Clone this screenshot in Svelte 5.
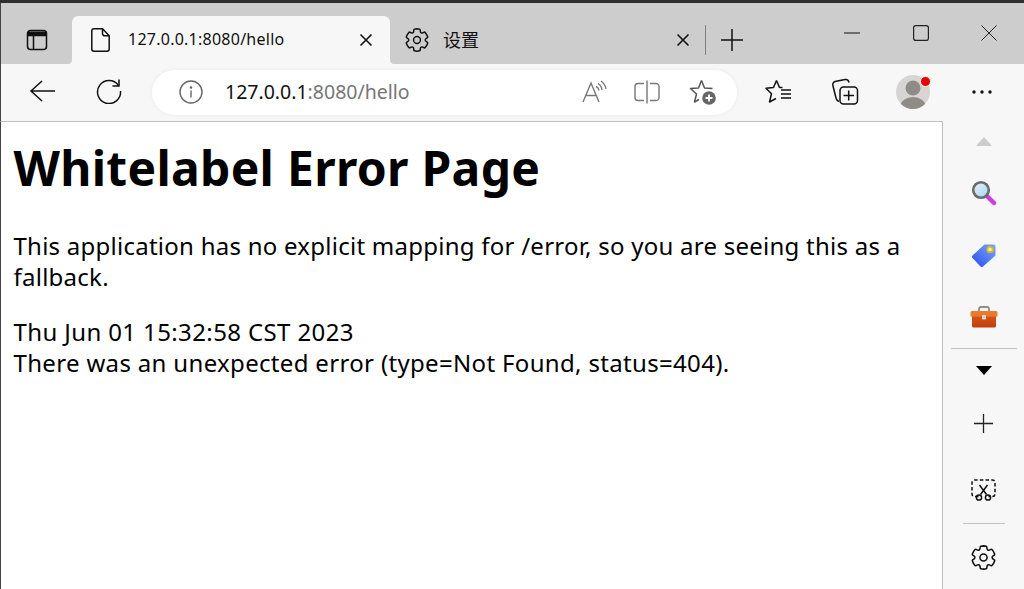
<script>
  const gearOuter = "M12.012 2.25c.734.008 1.465.093 2.182.253a.75.75 0 0 1 .582.649l.17 1.527a1.384 1.384 0 0 0 1.927 1.116l1.401-.615a.75.75 0 0 1 .85.174 9.792 9.792 0 0 1 2.204 3.792.75.75 0 0 1-.271.825l-1.242.916a1.381 1.381 0 0 0 0 2.226l1.243.915a.75.75 0 0 1 .272.826 9.797 9.797 0 0 1-2.204 3.792.75.75 0 0 1-.848.175l-1.407-.617a1.38 1.38 0 0 0-1.926 1.114l-.169 1.526a.75.75 0 0 1-.572.647 9.518 9.518 0 0 1-4.406 0 .75.75 0 0 1-.572-.647l-.168-1.524a1.382 1.382 0 0 0-1.926-1.11l-1.406.616a.75.75 0 0 1-.849-.175 9.798 9.798 0 0 1-2.204-3.796.75.75 0 0 1 .272-.826l1.243-.916a1.38 1.38 0 0 0 0-2.226l-1.243-.914a.75.75 0 0 1-.271-.826 9.79 9.79 0 0 1 2.204-3.792.75.75 0 0 1 .85-.174l1.4.615a1.387 1.387 0 0 0 1.93-1.118l.17-1.526a.75.75 0 0 1 .583-.65c.717-.159 1.45-.243 2.201-.252z";
</script>

<div class="win">
  <div class="strip">
    <div class="slot tabs-btn">
      <svg width="24" height="24" viewBox="0 0 24 24" fill="none" stroke="#111" stroke-width="1.5"><path d="M5.5 2.5h13a3 3 0 0 1 3 3v13a3 3 0 0 1-3 3h-13a3 3 0 0 1-3-3v-13a3 3 0 0 1 3-3z"/><path d="M3 3.5h18v4H3z" fill="#111" stroke="none"/><path d="M3 7.5h18M8.5 7.5v14"/></svg>
    </div>
    <div class="tab active">
      <svg width="19" height="24" viewBox="0 0 19 24" fill="none" stroke="#111" stroke-width="1.5" stroke-linejoin="round"><path d="M3 .8h8.500l6.700 7v13.200a2.200 2.200 0 0 1-2.200 2.200H3A2.200 2.200 0 0 1 .8 21V3A2.200 2.200 0 0 1 3 .8z"/><path d="M11.500.8v4.700a2.300 2.300 0 0 0 2.300 2.300h4.400"/></svg>
      <span class="tab-title">127.0.0.1:8080/hello</span>
      <svg class="tab-x" width="14" height="14" viewBox="0 0 14 14" stroke="#111" stroke-width="1.6"><path d="M1.500 1.500l11 11M12.500 1.500l-11 11"/></svg>
    </div>
    <div class="tab second">
      <svg width="24" height="24" viewBox="1.5 1.5 21 21" fill="none" stroke="#111" stroke-width="1.300" stroke-linejoin="round"><path d={gearOuter}/><circle cx="12" cy="12" r="3"/></svg>
      <span class="tab-title cjk">设置</span>
      <svg class="tab-x" width="14" height="14" viewBox="0 0 14 14" stroke="#111" stroke-width="1.600"><path d="M1.500 1.500l11 11M12.500 1.500l-11 11"/></svg>
    </div>
    <div class="tab-sep"></div>
    <div class="new-tab">
      <svg width="22" height="22" viewBox="0 0 22 22" stroke="#111" stroke-width="1.500"><path d="M11 0v22M0 11h22"/></svg>
    </div>
    <div class="win-controls">
      <div class="wc"><svg width="16" height="16" viewBox="0 0 16 16" stroke="#222" stroke-width="1.100"><path d="M0 8h16"/></svg></div>
      <div class="wc"><svg width="16" height="16" viewBox="0 0 16 16" fill="none" stroke="#222" stroke-width="1.200"><rect x=".6" y=".6" width="14.800" height="14.800" rx="2.200"/></svg></div>
      <div class="wc"><svg width="16" height="16" viewBox="0 0 16 16" stroke="#222" stroke-width="1"><path d="M.5.5l15 15M15.500.5l-15 15"/></svg></div>
    </div>
  </div>

  <div class="toolbar">
    <div class="tb nav first">
      <svg width="28" height="24" viewBox="0 0 28 24" fill="none" stroke="#111" stroke-width="1.500"><path d="M2 12h24M13 2L2 12l11 10"/></svg>
    </div>
    <div class="tb nav">
      <svg width="26" height="26" viewBox="0 0 26 26" fill="none" stroke="#111" stroke-width="1.500"><path d="M22.500 7.500A11.500 11.500 0 1 0 24.500 13"/><path d="M23 1.500v6.500h-6.500"/></svg>
    </div>
    <div class="pill">
      <svg class="info" width="24" height="24" viewBox="0 0 24 24" fill="none" stroke="#666" stroke-width="1.400"><circle cx="12" cy="12" r="11"/><path d="M12 10.500v7"/><circle cx="12" cy="7.500" r=".6"/></svg>
      <span class="url"><span class="host">127.0.0.1</span>:8080/hello</span>
      <div class="pill-icons">
        <svg width="26" height="24" viewBox="0 0 26 24" fill="none" stroke="#777" stroke-width="1.400"><path d="M1 22L9 3l8 19M4 15.500h10"/><path d="M14 6.500a5 5 0 0 1 3 4M16 3.500a8.500 8.500 0 0 1 4 6.500M19 1a12 12 0 0 1 5 8"/></svg>
        <svg class="i-split" width="26" height="24" viewBox="0 0 26 24" fill="none" stroke="#777" stroke-width="1.400"><path d="M10 3.500H4a3 3 0 0 0-3 3v11a3 3 0 0 0 3 3h6M16 3.500h6a3 3 0 0 1 3 3v11a3 3 0 0 1-3 3h-6M13 .5v23"/></svg>
        <svg class="i-add" width="28" height="28" viewBox="0 0 28 28" fill="none" stroke="#555" stroke-width="1.500" stroke-linejoin="round"><path d="M12.500 2.500l3 7.500 8 .5M12.500 2.500L9.500 10l-8 .5 6 5.500-2 8 4.500-2.500"/><circle cx="20" cy="20" r="6.800" fill="#666" stroke="none"/><path d="M20 16.500v7M16.500 20h7" stroke="#fff" stroke-width="1.800"/></svg>
      </div>
    </div>
    <div class="right-icons">
      <svg class="i-fav" width="28" height="26" viewBox="0 0 28 26" fill="none" stroke="#111" stroke-width="1.500" stroke-linejoin="round"><path d="M11.500 1.500l3 7h3M11.500 1.500l-3 7-7.500.8 5.500 5.500-2 8.200 6.500-3.500"/><path d="M16 11h10M16 15h10M16 19h10"/></svg>
      <svg class="i-col" width="28" height="28" viewBox="0 0 28 28" fill="none" stroke="#111" stroke-width="1.500" stroke-linejoin="round"><path d="M8 23.500C6 23 5.500 22 5 20L2 8C1.500 6 2 4 4 3.500l10-2c2-.4 3.500.5 4 3"/><rect x="9" y="9" width="17.500" height="17" rx="3.500"/><path d="M17.700 12.500v10M12.500 17.500h10.500"/></svg>
      <div class="avatar">
        <svg width="34" height="34" viewBox="0 0 34 34"><defs><clipPath id="av"><circle cx="17" cy="17" r="17"/></clipPath></defs><circle cx="17" cy="17" r="17" fill="#d6d5d3"/><g clip-path="url(#av)" fill="#8f8b87"><circle cx="17" cy="13" r="7.500"/><ellipse cx="17" cy="31" rx="12.500" ry="9"/></g></svg>
        <span class="dot"></span>
      </div>
      <svg class="i-more" width="20" height="4" viewBox="0 0 20 4" fill="#111"><circle cx="2" cy="2" r="1.700"/><circle cx="10" cy="2" r="1.700"/><circle cx="18" cy="2" r="1.700"/></svg>
    </div>
  </div>

  <div class="body">
    <main>
      <h1>Whitelabel Error Page</h1>
      <p>This application has no explicit mapping for /error, so you are seeing this as a fallback.</p>
      <div class="ts">Thu Jun 01 15:32:58 CST 2023</div>
      <div class="err">There was an unexpected error (type=Not Found, status=404).</div>
    </main>
    <aside>
      <div class="side s-up"><svg width="16" height="9" viewBox="0 0 16 9" fill="#ccc"><path d="M8 0l8 9H0z"/></svg></div>
      <div class="side s-search">
        <svg width="26" height="26" viewBox="0 0 26 26"><defs><linearGradient id="gl" x1="0" y1="0" x2="1" y2="1"><stop offset="0" stop-color="#e4f3fb"/><stop offset="1" stop-color="#a6d4ee"/></linearGradient></defs><path d="M15.500 15.500l7.500 7.500" stroke="#cb3fe0" stroke-width="4.500" stroke-linecap="round"/><circle cx="10" cy="10" r="7.800" fill="url(#gl)" stroke="#6b6b6b" stroke-width="2.600"/></svg>
      </div>
      <div class="side s-tag">
        <svg width="26" height="26" viewBox="0 0 26 26"><defs><linearGradient id="gt" x1="0" y1="1" x2="1" y2="0"><stop offset="0" stop-color="#2b4cf2"/><stop offset="1" stop-color="#79a9f7"/></linearGradient></defs><path d="M13.500 2.500h9a2 2 0 0 1 2 2v9L12 24.500a1.800 1.800 0 0 1-2.500 0L1.500 16a1.800 1.800 0 0 1 0-2.500z" fill="url(#gt)"/><circle cx="19" cy="7.500" r="2.700" fill="#f7f1c4" stroke="#e9bb16" stroke-width="1.800"/></svg>
      </div>
      <div class="side s-box">
        <svg width="28" height="22" viewBox="0 0 28 22"><defs><linearGradient id="gb" x1="0" y1="0" x2="0" y2="1"><stop offset="0" stop-color="#d9561b"/><stop offset="1" stop-color="#bd3f10"/></linearGradient></defs><path d="M9 5V3a2 2 0 0 1 2-2h6a2 2 0 0 1 2 2v2" fill="none" stroke="#8d8d8d" stroke-width="1.800"/><rect x="2" y="9" width="24" height="12.500" rx="1.500" fill="url(#gb)"/><path d="M2 5h24a1.500 1.500 0 0 1 1.500 1.500V10.500H.5V6.500A1.500 1.500 0 0 1 2 5z" fill="#ec7a2c"/><rect x="12" y="9" width="4" height="4.500" rx=".8" fill="#d5d5d5"/></svg>
      </div>
      <div class="rule wide"></div>
      <div class="side s-down"><svg width="16" height="9" viewBox="0 0 16 9" fill="#000"><path d="M0 0h16L8 9z"/></svg></div>
      <div class="side s-plus"><svg width="19" height="19" viewBox="0 0 19 19" stroke="#222" stroke-width="1.300"><path d="M9.500 0v19M0 9.500h19"/></svg></div>
      <div class="side s-cut">
        <svg width="25" height="22" viewBox="0 0 25 22" fill="none" stroke="#111" stroke-width="1.500"><path d="M7.500 17.500H3.500a2.500 2.500 0 0 1-2.500-2.500V3.500A2.500 2.500 0 0 1 3.500 1h18A2.500 2.500 0 0 1 24 3.500V15a2.500 2.500 0 0 1-2.500 2.500h-4" stroke-dasharray="3.500 2.200"/><path d="M8.500 6l7 9.500M16.500 6l-7 9.500"/><circle cx="8" cy="18.500" r="2.600"/><circle cx="17" cy="18.500" r="2.600"/></svg>
      </div>
      <div class="rule narrow"></div>
      <div class="side s-gear">
        <svg width="25" height="25" viewBox="1.500 1.500 21 21" fill="none" stroke="#111" stroke-width="1.300" stroke-linejoin="round"><path d={gearOuter}/><circle cx="12" cy="12" r="3"/></svg>
      </div>
    </aside>
  </div>
</div>

<style>
  :global(body) { margin: 0; background: #fff; overflow: hidden; }
  .win {
    width: 1024px; height: 589px; display: flex; flex-direction: column;
    border-top: 3px solid #2e2e2e; box-sizing: border-box; overflow: hidden;
    font-family: "Noto Sans", "Noto Sans CJK SC", sans-serif; color: #000;
  }
  .strip {
    height: 61px; flex: none; display: flex; align-items: flex-end;
    background: #cdcdcd; border-left: 1px solid #444;
  }
  .tabs-btn { width: 71px; height: 48px; display: flex; align-items: center; justify-content: center; box-sizing: border-box; }
  .tab { height: 48px; display: flex; align-items: center; box-sizing: border-box; position: relative; }
  .tab.active {
    width: 318px; background: #f7f7f7; border-radius: 6px 6px 0 0; padding: 0 17px 0 19px;
  }
  .tab.active::before, .tab.active::after {
    content: ""; position: absolute; bottom: 0; width: 5px; height: 5px;
  }
  .tab.active::before { left: -5px; background: radial-gradient(circle at 0 0, transparent 5px, #f7f7f7 5.500px); }
  .tab.active::after { right: -5px; background: radial-gradient(circle at 100% 0, transparent 5px, #f7f7f7 5.500px); }
  .tab-title { font-size: 16px; letter-spacing: .25px; color: #111; margin-left: 18px; flex: 1; white-space: nowrap; position: relative; top: -1px; }
  .tab.second { width: 315px; padding: 0 15px 0 15px; }
  .tab.second .tab-title { margin-left: 14px; font-size: 18px; letter-spacing: 0; }
  .cjk { font-family: "Noto Sans CJK SC", sans-serif; }
  .tab-sep { width: 1px; height: 30px; background: #808080; margin: 0 0 9px 0; }
  .new-tab { width: 22px; margin: 0 0 13px 15px; display: flex; }
  .win-controls { margin-left: auto; align-self: flex-start; display: flex; padding-top: 22px; margin-right: 27px; gap: 53px; }
  .wc { width: 16px; height: 16px; display: flex; }
  .wc:nth-child(2) { margin-right: -1px; }

  .toolbar { height: 57px; flex: none; display: flex; align-items: center; background: #f7f7f7; border-left: 1px solid #444; }
  .tb { display: flex; align-items: center; justify-content: center; position: relative; top: -2px; }
  .first { margin-left: 28px; width: 28px; }
  .nav + .nav { margin-left: 39px; width: 26px; }
  .pill {
    margin-left: 30px; width: 585px; height: 45px; border-radius: 23px; background: #fff;
    display: flex; align-items: center; box-sizing: border-box; padding: 0 0 2px 27px;
    box-shadow: 0 0 4px rgba(0,0,0,.06);
  }
  .url { margin-left: 22px; font-size: 19.500px; color: #767676; white-space: nowrap; }
  .host { color: #111; }
  .pill-icons { margin-left: auto; display: flex; align-items: center; padding-right: 20px; }
  .i-split { margin-left: 26px; }
  .i-add { margin-left: 29px; }
  .right-icons { display: flex; align-items: center; flex: 1; padding-bottom: 2px; }
  .i-fav { margin-left: 28px; }
  .i-col { margin-left: 38px; }
  .avatar { margin-left: 37px; position: relative; width: 34px; height: 34px; display: flex; }
  .dot {
    position: absolute; top: 1px; right: -1px; width: 9px; height: 9px;
    background: #e60000; border-radius: 50%; border: 1.500px solid #f7f7f7;
  }
  .i-more { margin-left: 42px; }

  .body { flex: 1; display: flex; min-height: 0; }
  main {
    flex: 1; min-width: 0; background: #fff; box-sizing: border-box;
    border-top: 1px solid #bdbdbd; border-right: 1px solid #bdbdbd; border-left: 1px solid #444;
    padding: 0 12px 0 12.500px; font-size: 24px; line-height: 31px; letter-spacing: .25px;
  }
  h1 { font-size: 48px; line-height: 64px; font-weight: 700; margin: 14px 0 0; letter-spacing: .29px; }
  p { margin: 30px 0 0; }
  .ts { margin-top: 24px; letter-spacing: .38px; }
  .err { letter-spacing: .33px; }

  aside {
    width: 81px; flex: none; background: #f7f7f7; display: flex; flex-direction: column; align-items: center;
  }
  .side { display: flex; align-items: center; justify-content: center; width: 100%; }
  .s-up { margin-top: 16px; height: 9px; }
  .s-search { margin-top: 34px; height: 26px; }
  .s-tag { margin-top: 36px; height: 26px; }
  .s-box { margin-top: 38px; height: 22px; }
  .rule { height: 1px; background: #c4c4c4; flex: none; }
  .rule.wide { width: 66px; margin-top: 20px; }
  .rule.narrow { width: 42px; margin-top: 22px; }
  .s-down { margin-top: 17px; height: 9px; }
  .s-plus { margin-top: 39px; height: 19px; }
  .s-cut { margin-top: 46px; height: 22px; }
  .s-gear { margin-top: 20px; height: 26px; }
</style>
